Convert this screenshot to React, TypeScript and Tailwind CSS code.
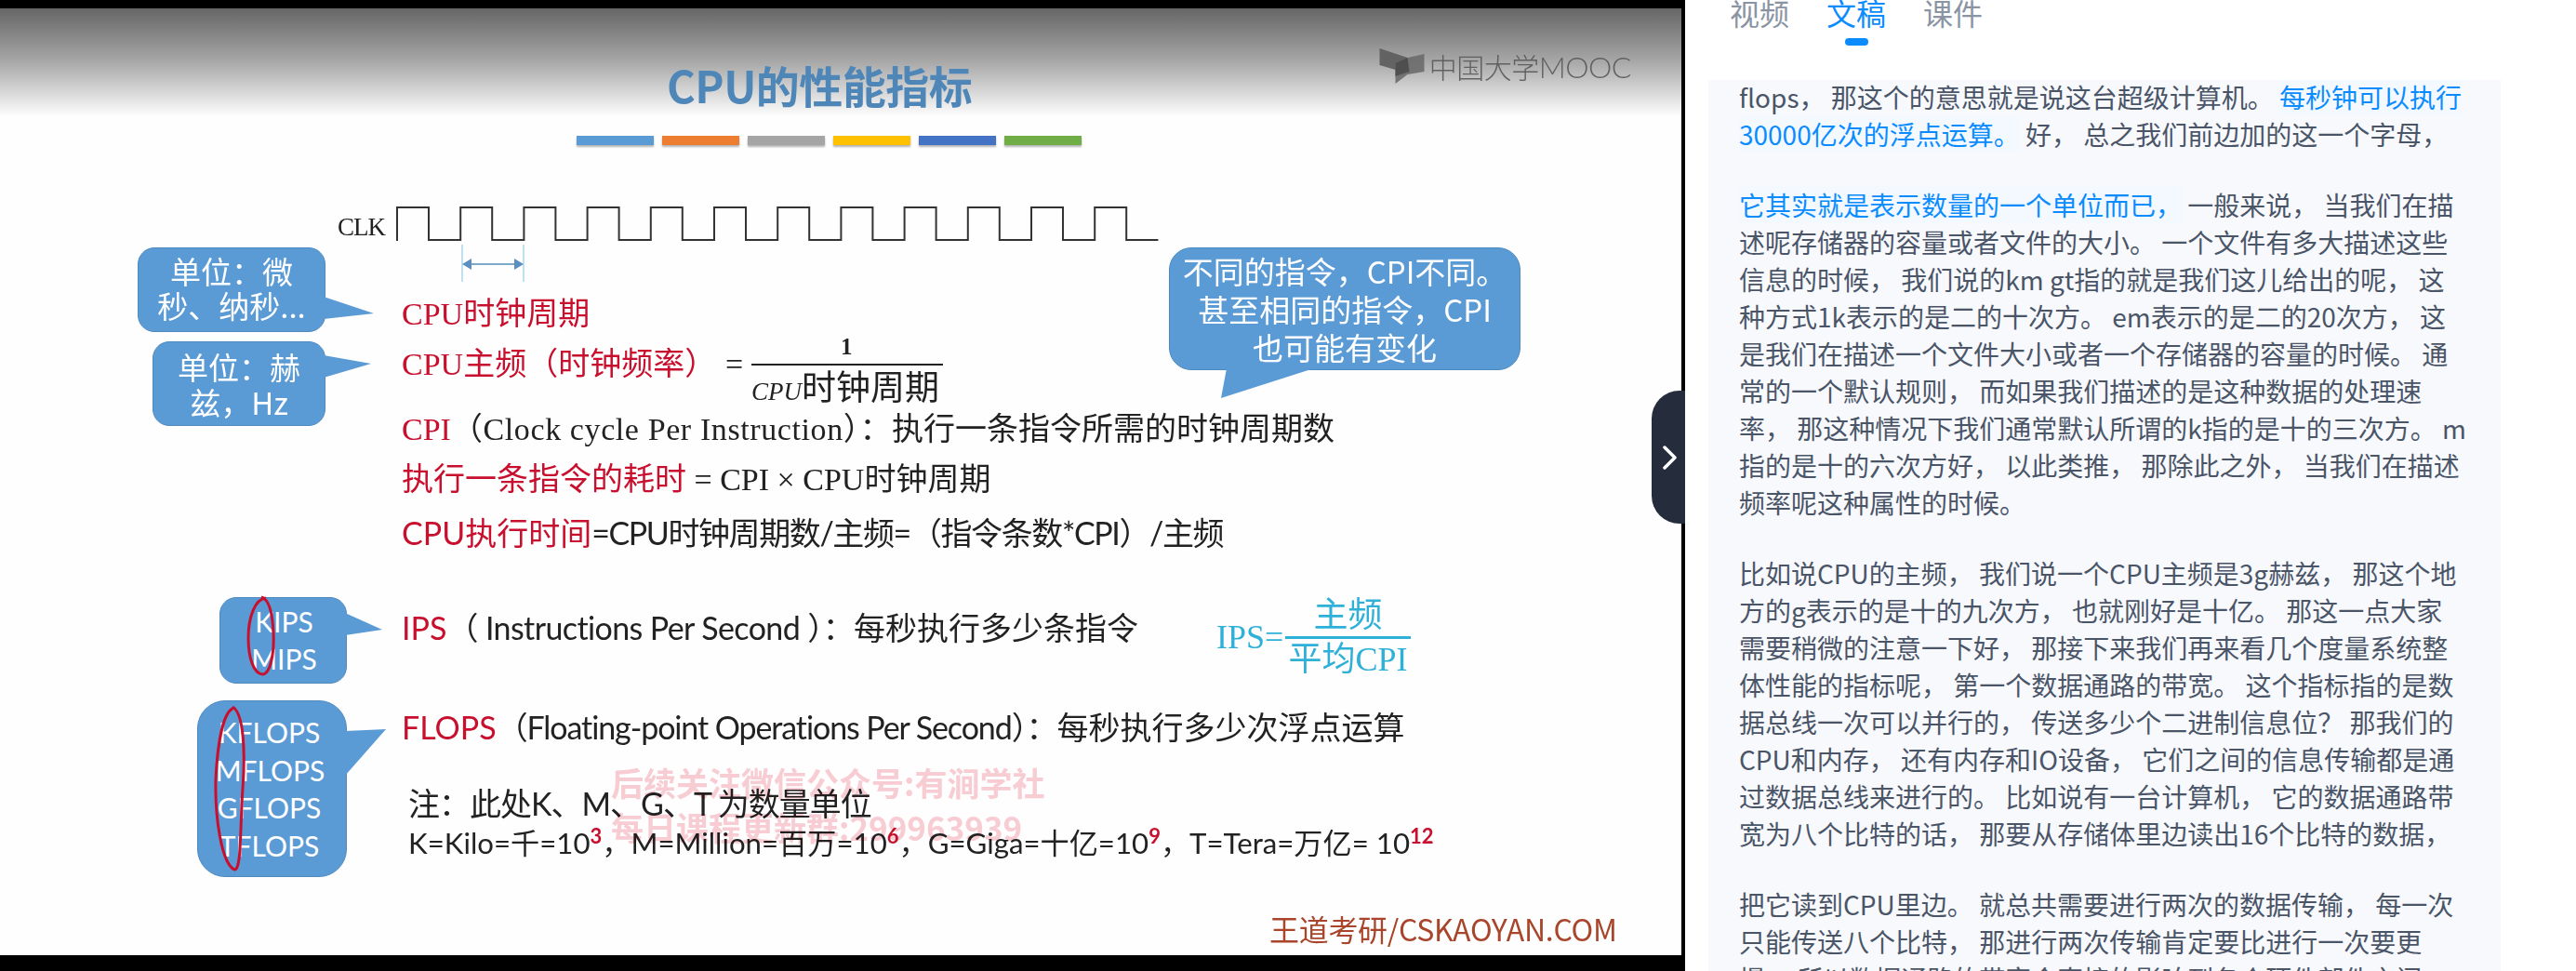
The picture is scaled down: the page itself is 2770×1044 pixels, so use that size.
const serif = "font-['Liberation_Serif','Noto_Sans_CJK_SC',serif]";
const sans = "font-['Lato','Noto_Sans_CJK_SC',sans-serif]";
const cjk = "font-['Noto_Sans_CJK_SC','Liberation_Sans',sans-serif]";

const bars = ["bg-[#5b9bd5]", "bg-[#ed7d31]", "bg-[#a5a5a5]", "bg-[#ffc000]", "bg-[#4472c4]", "bg-[#70ad47]"];

type Seg = { text: string; blue?: boolean };
const transcript: (string | Seg[])[][] = [
  [
    [{ text: "flops， 那这个的意思就是说这台超级计算机。 " }, { text: "每秒钟可以执行", blue: true }],
    [{ text: "30000亿次的浮点运算。", blue: true }, { text: " 好， 总之我们前边加的这一个字母，" }],
  ],
  [
    [{ text: "它其实就是表示数量的一个单位而已，", blue: true }, { text: " 一般来说， 当我们在描" }],
    "述呢存储器的容量或者文件的大小。 一个文件有多大描述这些",
    "信息的时候， 我们说的km gt指的就是我们这儿给出的呢， 这",
    "种方式1k表示的是二的十次方。 em表示的是二的20次方， 这",
    "是我们在描述一个文件大小或者一个存储器的容量的时候。 通",
    "常的一个默认规则， 而如果我们描述的是这种数据的处理速",
    "率， 那这种情况下我们通常默认所谓的k指的是十的三次方。 m",
    "指的是十的六次方好， 以此类推， 那除此之外， 当我们在描述",
    "频率呢这种属性的时候。",
  ],
  [
    "比如说CPU的主频， 我们说一个CPU主频是3g赫兹， 那这个地",
    "方的g表示的是十的九次方， 也就刚好是十亿。 那这一点大家",
    "需要稍微的注意一下好， 那接下来我们再来看几个度量系统整",
    "体性能的指标呢， 第一个数据通路的带宽。 这个指标指的是数",
    "据总线一次可以并行的， 传送多少个二进制信息位？ 那我们的",
    "CPU和内存， 还有内存和IO设备， 它们之间的信息传输都是通",
    "过数据总线来进行的。 比如说有一台计算机， 它的数据通路带",
    "宽为八个比特的话， 那要从存储体里边读出16个比特的数据，",
  ],
  [
    "把它读到CPU里边。 就总共需要进行两次的数据传输， 每一次",
    "只能传送八个比特， 那进行两次传输肯定要比进行一次要更",
    "慢。 所以数据通路的带宽会直接的影响到各个硬件部件之间",
  ],
];

function Logo() {
  return (
    <div className="flex items-center gap-[5px] mt-[43px] mr-[54px] opacity-90">
      <svg viewBox="0 0 48 38" className="w-[49px] h-[38px]">
        <polygon points="0,0 30,10 32,25 17,23 0,18" fill="#5c5c5c" />
        <polygon points="48,6 48,25 30,28 17,38 17,16 30,10" fill="#6c6c6c" />
        <polygon points="17,16 30,10 32,25 17,30" fill="#454545" />
      </svg>
      <span className="font-['Noto_Sans_CJK_SC',sans-serif] font-light text-[30px] leading-[30px] text-[#595959] tracking-[-0.5px]">
        中国大学<span className="font-['Lato',sans-serif] text-[32px] font-light">MOOC</span>
      </span>
    </div>
  );
}

function ClockWave() {
  // 12 pulses, 68.2px apart, plus the arrow marking one period
  const d = Array.from({ length: 12 }, (_, i) => {
    const x = 1 + i * 68.2;
    return `${i === 0 ? `M${x} 37` : `L${x} 36`} L${x} 1 L${x + 34} 1 L${x + 34} 36 L${x + 68.2} 36`;
  }).join(" ");
  return (
    <svg viewBox="0 0 822 81" className="w-[822px] h-[81px]">
      <path d={d} fill="none" stroke="#333" strokeWidth="2" />
      <path d="M71 41V81M137 41V81" stroke="#a9d6ea" strokeWidth="1.5" />
      <path d="M78 62H130" stroke="#7fa9c9" strokeWidth="2" />
      <polygon points="71,62 81,56 81,68" fill="#5b8fbf" />
      <polygon points="137,62 127,56 127,68" fill="#5b8fbf" />
    </svg>
  );
}

function Slide() {
  return (
    <div className="relative flex-1 min-w-0 bg-[#fefefe] overflow-hidden blur-[0.7px] flex flex-col">
      <div className="h-[116px] shrink-0 bg-linear-to-b from-[#666666] via-[#a9a9a9] to-[#fefefe] flex">
        <h1 className={`${cjk} ml-[717px] mt-[53px] text-[47px] leading-[58px] font-semibold text-[#4f86b8] tracking-[-0.5px]`}>CPU的性能指标</h1>
        <div className="ml-auto"><Logo /></div>
      </div>

      <div className="flex gap-[9px] ml-[620px] mt-[21px]">
        {bars.map((b) => (
          <div key={b} className={`w-[83px] h-[10px] ${b} shadow-[0_2px_2px_rgba(0,0,0,0.3)]`} />
        ))}
      </div>

      <div className="flex ml-[363px] mt-[66px]">
        <span className={`${serif} w-[63px] text-[27px] leading-[44px] text-[#222] tracking-[-1px]`}>CLK</span>
        <ClockWave />
      </div>

      <div className="flex flex-col ml-[432px] mt-[15px] text-[34px] leading-[40px] text-[#222]">
        <div className={`${serif} h-[40px] text-[#c8102e]`}>CPU时钟周期</div>

        <div className={`${serif} h-[40px] mt-[14px] flex items-center`}>
          <span className="w-[348px] text-[#c8102e] whitespace-nowrap">CPU主频（时钟频率）</span>
          <span className="w-[28px]">=</span>
          <div className="relative w-[206px] h-[2px] bg-[#222]">
            <span className="absolute left-[96px] -top-[36px] text-[25px] leading-[36px] font-bold">1</span>
            <span className="absolute left-0 top-[5px] text-[37px] leading-[44px] whitespace-nowrap">
              <span className="italic text-[27px]">CPU</span>时钟周期
            </span>
          </div>
        </div>

        <div className={`${serif} h-[40px] mt-[30px] whitespace-nowrap`}>
          <span className="text-[#c8102e]">CPI</span>
          <span className="tracking-[0.6px]">（Clock cycle Per Instruction）：</span>执行一条指令所需的时钟周期数
        </div>

        <div className={`${serif} h-[40px] mt-[14px] whitespace-nowrap`}>
          <span className="text-[#c8102e]">执行一条指令的耗时</span> = CPI × CPU时钟周期
        </div>

        <div className={`${sans} h-[40px] mt-[17px] whitespace-nowrap`}>
          <span className="text-[#c8102e]">CPU执行时间</span>
          <span className="tracking-[-1.4px]">=CPU时钟周期数/主频=（指令条数*CPI）/主频</span>
        </div>

        <div className={`${sans} h-[40px] mt-[62px] flex items-center`}>
          <span className="w-[876px] whitespace-nowrap">
            <span className="text-[#c8102e]">IPS</span>
            <span className="tracking-[-0.6px]">（ Instructions Per Second ）：</span>每秒执行多少条指令
          </span>
          <div className={`${serif} mt-[20px] flex items-center text-[#2fb0d8] text-[36px]`}>
            <span className="w-[74px]">IPS=</span>
            <div className="w-[135px] flex flex-col items-center">
              <span className="leading-[44px] text-[37px] border-b-[3px] border-[#2fb0d8] w-full text-center">主频</span>
              <span className="leading-[44px] whitespace-nowrap">平均CPI</span>
            </div>
          </div>
        </div>

        <div className={`${sans} h-[40px] mt-[67px] whitespace-nowrap`}>
          <span className="text-[#c8102e]">FLOPS</span>
          <span className="tracking-[-1.1px]">（Floating-point Operations Per Second）：</span>每秒执行多少次浮点运算
        </div>

        <div className={`${sans} h-[40px] mt-[42px] ml-[7px] whitespace-nowrap tracking-[-1px]`}>注：此处K、M、G、T 为数量单位</div>

        <div className={`${sans} h-[40px] mt-[2px] ml-[7px] whitespace-nowrap text-[31.2px]`}>
          K=Kilo=千=10<sup className="text-[#c8102e] text-[22px] font-bold">3</sup>，M=Million=百万=10<sup className="text-[#c8102e] text-[22px] font-bold">6</sup>，G=Giga=十亿=10<sup className="text-[#c8102e] text-[22px] font-bold">9</sup>，T=Tera=万亿= 10<sup className="text-[#c8102e] text-[22px] font-bold">12</sup>
        </div>

        <div className={`${cjk} mt-[52px] ml-[933px] text-[32px] leading-[40px] text-[#a8452a] whitespace-nowrap tracking-[-0.3px]`}>王道考研/CSKAOYAN.COM</div>
      </div>

      {/* watermark burnt into the video */}
      <div className={`${cjk} absolute left-[657px] top-[808px] text-[35px] leading-[48px] font-bold text-[#f9cdd4] mix-blend-multiply whitespace-nowrap`}>
        <div>后续关注微信公众号:有涧学社</div>
        <div>每日课程更新群:299963939</div>
      </div>

      {/* callouts */}
      <div className={`${cjk} absolute left-[148px] top-[257px] w-[202px] h-[91px] pb-[3px] rounded-[18px] bg-[#5b9bd5] border border-[#4f8abf] flex flex-col items-center justify-center text-white text-[33px] leading-[37px] whitespace-nowrap`}>
        <span>单位：微</span>
        <span>秒、纳秒...</span>
        <svg viewBox="0 0 54 26" className="absolute left-[199px] top-[52px] w-[54px] h-[26px]">
          <polygon points="0,0 54,18 0,24" fill="#5b9bd5" />
        </svg>
      </div>
      <div className={`${cjk} absolute left-[164px] top-[358px] w-[186px] h-[91px] rounded-[18px] bg-[#5b9bd5] border border-[#4f8abf] flex flex-col items-center justify-center text-white text-[33px] leading-[38px] whitespace-nowrap`}>
        <span>单位：赫</span>
        <span>兹，Hz</span>
        <svg viewBox="0 0 51 24" className="absolute left-[183px] top-[14px] w-[51px] h-[24px]">
          <polygon points="0,0 51,9 0,24" fill="#5b9bd5" />
        </svg>
      </div>
      <div className={`${cjk} absolute left-[1257px] top-[257px] w-[378px] h-[132px] rounded-[24px] bg-[#5b9bd5] border border-[#4f8abf] flex flex-col items-center justify-center text-white text-[33px] leading-[41px] whitespace-nowrap`}>
        <span>不同的指令，CPI不同。</span>
        <span>甚至相同的指令，CPI</span>
        <span>也可能有变化</span>
        <svg viewBox="0 0 100 32" className="absolute left-[55px] top-[129px] w-[100px] h-[32px]">
          <polygon points="6,0 100,0 0,32" fill="#5b9bd5" />
        </svg>
      </div>

      <div className={`${sans} absolute left-[236px] top-[633px] w-[137px] h-[93px] pb-[2px] rounded-[18px] bg-[#5b9bd5] border border-[#4f8abf] flex flex-col items-center justify-center text-white text-[30px] leading-[40px]`}>
        <span className="ml-[2px]">KIPS</span>
        <span className="ml-[2px]">MIPS</span>
        <svg viewBox="0 0 40 24" className="absolute left-[134px] top-[16px] w-[40px] h-[24px]">
          <polygon points="0,0 40,18 0,24" fill="#5b9bd5" />
        </svg>
        <svg viewBox="0 0 32 88" className="absolute left-[27px] -top-[3px] w-[32px] h-[88px]">
          <path d="M22 3C10 4 3 24 3 46C3 68 9 84 18 85C27 85 31 62 30 40C29 20 25 4 17 2" fill="none" stroke="#c8102e" strokeWidth="3" />
        </svg>
      </div>
      <div className={`${sans} absolute left-[212px] top-[744px] w-[161px] h-[190px] rounded-[30px] bg-[#5b9bd5] border border-[#4f8abf] flex flex-col items-center justify-center text-white text-[30px] leading-[40.5px]`}>
        <span className="ml-[-6px]">KFLOPS</span>
        <span className="ml-[-4px]">MFLOPS</span>
        <span className="ml-[-6px]">GFLOPS</span>
        <span className="ml-[-6px]">TFLOPS</span>
        <svg viewBox="0 0 44 52" className="absolute left-[158px] top-[30px] w-[44px] h-[52px]">
          <polygon points="0,2 44,0 0,50" fill="#5b9bd5" />
        </svg>
        <svg viewBox="0 0 36 180" className="absolute left-[17px] top-[4px] w-[36px] h-[180px]">
          <path d="M22 3C10 6 4 40 2 80C1 120 8 170 22 177C30 178 28 130 31 90C34 50 32 8 20 2" fill="none" stroke="#c8102e" strokeWidth="3" />
        </svg>
      </div>
    </div>
  );
}

function Handle() {
  return (
    <div className="absolute right-0 top-[420px] w-[36px] h-[143px] rounded-l-[30px] bg-[#252c3b] flex items-center">
      <svg viewBox="0 0 16 26" className="ml-[12px] w-[16px] h-[26px]">
        <path d="M2 2L13 13L2 24" fill="none" stroke="#fff" strokeWidth="3.5" strokeLinecap="round" strokeLinejoin="round" />
      </svg>
    </div>
  );
}

function Transcript() {
  return (
    <div className={`${cjk} flex-1 min-h-0 ml-[25px] w-[852px] pl-[33px] bg-[#f8f9fd] text-[28px] leading-[40px] text-[#4a5568] overflow-hidden`}>
      <div className="-mt-[2px]">
        {transcript.map((para, i) => (
          <div key={i} className="mb-[36px]">
            {para.map((line, j) => (
              <div key={j} className="whitespace-pre">
                {typeof line === "string"
                  ? line
                  : line.map((seg, k) =>
                      seg.blue ? (
                        <span key={k} className="text-[#0a8cff] bg-[#f3f9ff]">{seg.text}</span>
                      ) : (
                        <span key={k}>{seg.text}</span>
                      )
                    )}
              </div>
            ))}
          </div>
        ))}
      </div>
    </div>
  );
}

export default function App() {
  return (
    <div className="flex w-[2770px] h-[1044px] overflow-hidden bg-white">
      <div className="relative w-[1812px] shrink-0 bg-black pt-[9px] pr-[4px] pb-[17px] flex">
        <Slide />
        <Handle />
      </div>
      <div className="flex-1 min-w-0 flex flex-col">
        <div className={`${cjk} h-[86px] shrink-0 pl-[48px] flex gap-[40px] text-[32px] leading-[32px] text-[#8a94a3]`}>
          <span className="w-[64px] -mt-[3px]">视频</span>
          <div className="w-[64px] -mt-[3px] flex flex-col items-center text-[#0a8cff]">
            <span>文稿</span>
            <span className="mt-[12px] w-[25px] h-[8px] rounded-full bg-[#0a8cff]" />
          </div>
          <span className="w-[64px] -mt-[3px]">课件</span>
        </div>
        <Transcript />
      </div>
    </div>
  );
}
